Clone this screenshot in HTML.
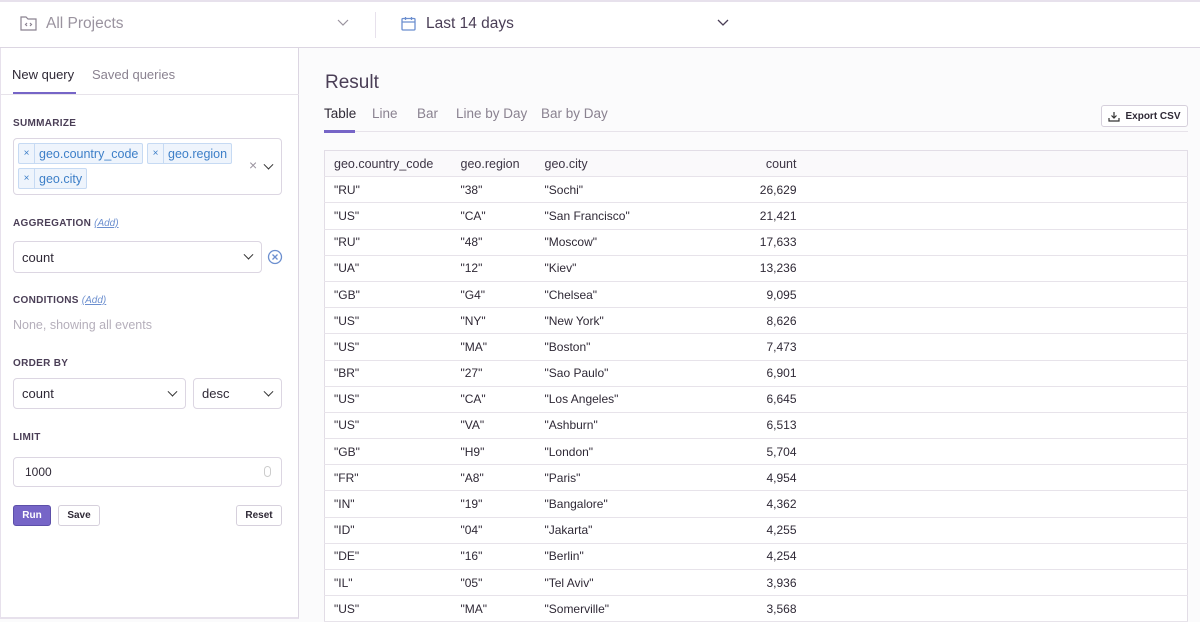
<!DOCTYPE html>
<html><head><meta charset="utf-8"><style>
*{box-sizing:border-box;margin:0;padding:0}
body{width:1200px;height:619px;overflow:hidden;font-family:"Liberation Sans",sans-serif;background:#fbfbfc;color:#2f2936;position:relative}
.top{position:absolute;left:0;top:0;width:1200px;height:48px;background:#fff;border-top:2px solid #e7e1ec;border-bottom:1px solid #dcd6e2}
.side{position:absolute;left:0;top:48px;width:299px;height:571px;background:#fff;border-right:1px solid #dcd6e2;border-left:1px solid #e7e1ec;border-bottom:2px solid #e7e1ec}
.lbl{position:absolute;left:12px;font-size:10px;font-weight:bold;color:#4a3e56;letter-spacing:.3px}
.add{font-style:italic;font-weight:normal;color:#6c8fcf;text-decoration:underline;letter-spacing:0;margin-left:3px;font-size:10px}
.box{position:absolute;background:#fff;border:1px solid #dcd6e2;border-radius:4px}
.sel{font-size:13px;color:#2f2936;padding-left:8px;display:flex;align-items:center}
.chev{position:absolute;right:9px;top:50%;margin-top:-3px;width:7px;height:7px;border-right:1.5px solid #333;border-bottom:1.5px solid #333;transform:rotate(45deg) translate(-2px,-2px)}
.tag{position:absolute;height:21px;background:#eef4fc;border:1px solid #c6daf3;border-radius:2px;font-size:12.5px;color:#3d7fc8;display:flex;align-items:center}
.tag b{font-weight:normal;width:16px;text-align:center;border-right:1px solid #c6daf3;height:100%;line-height:19px;font-size:10px}
.tag span{padding:0 4px}
.btn{position:absolute;height:21px;border:1px solid #d6d0dc;border-radius:3px;background:#fff;font-size:10px;font-weight:bold;display:flex;align-items:center;justify-content:center;color:#2f2936}
table{position:absolute;left:324px;top:150px;width:864px;border-collapse:collapse;background:#fff;border:1px solid #e2dde6;font-size:12px}
td,th{height:26.2px;border-bottom:1px solid #e7e3ea;text-align:left;padding-left:9px;font-weight:normal}
th{background:#faf9fb;color:#3d3545;font-size:12.5px}
.r{text-align:right;padding-right:0}
</style></head><body>
<div class="top">
<svg style="position:absolute;left:20px;top:13px" width="17" height="16" viewBox="0 0 17 16" fill="none" stroke="#8a8290" stroke-width="1.2"><path d="M1 2h5l2 2h8v11H1z"/><path d="M7 8l-1.5 1.5L7 11M10 8l1.5 1.5L10 11"/></svg>
<div style="position:absolute;left:46px;top:13px;font-size:15.5px;color:#9a939f">All Projects</div>
<svg style="position:absolute;left:337px;top:17px" width="12" height="8"><path d="M1 1l5 5 5-5" fill="none" stroke="#9a939f" stroke-width="1.2"/></svg>
<div style="position:absolute;left:375px;top:10px;width:1px;height:26px;background:#e7e1ec"></div>
<svg style="position:absolute;left:401px;top:14px" width="15" height="15" viewBox="0 0 15 15" fill="none" stroke="#6c8fcf" stroke-width="1.3"><rect x="1" y="2.5" width="13" height="11.5" rx="1"/><path d="M1 6h13M4.5 1v3M10.5 1v3"/></svg>
<div style="position:absolute;left:426px;top:13px;font-size:15.5px;color:#4a3e56">Last 14 days</div>
<svg style="position:absolute;left:717px;top:17px" width="12" height="8"><path d="M1 1l5 5 5-5" fill="none" stroke="#4a3e56" stroke-width="1.3"/></svg>
</div>
<div class="side">
<div style="position:absolute;left:11px;top:19px;font-size:13px;color:#2f2936">New query</div>
<div style="position:absolute;left:91px;top:19px;font-size:13px;color:#8a8290">Saved queries</div>
<div style="position:absolute;left:12px;top:44px;width:63px;height:3px;background:#7665c7"></div>
<div style="position:absolute;left:0;top:46px;width:298px;height:1px;background:#e7e3ea"></div>
<div class="lbl" style="top:70px">SUMMARIZE</div>
<div class="box" style="left:12px;top:90px;width:269px;height:57px">
<div class="tag" style="left:4px;top:4px"><b>×</b><span>geo.country_code</span></div>
<div class="tag" style="left:133px;top:4px"><b>×</b><span>geo.region</span></div>
<div class="tag" style="left:4px;top:29px"><b>×</b><span>geo.city</span></div>
<div style="position:absolute;left:235px;top:18px;color:#9a939f;font-size:14px">×</div>
<div class="chev"></div>
</div>
<div class="lbl" style="top:170px">AGGREGATION<span class="add">(Add)</span></div>
<div class="box sel" style="left:12px;top:193px;width:249px;height:32px">count<div class="chev"></div></div>
<svg style="position:absolute;left:266px;top:201px" width="16" height="16"><circle cx="8" cy="8" r="6.5" fill="none" stroke="#6c8fcf" stroke-width="1.3"/><path d="M5.5 5.5l5 5M10.5 5.5l-5 5" stroke="#6c8fcf" stroke-width="1.3"/></svg>
<div class="lbl" style="top:247px">CONDITIONS<span class="add">(Add)</span></div>
<div style="position:absolute;left:12px;top:270px;font-size:12.5px;color:#b5afbb">None, showing all events</div>
<div class="lbl" style="top:310px">ORDER BY</div>
<div class="box sel" style="left:12px;top:330px;width:173px;height:31px">count<div class="chev"></div></div>
<div class="box sel" style="left:192px;top:330px;width:89px;height:31px">desc<div class="chev"></div></div>
<div class="lbl" style="top:384px">LIMIT</div>
<div class="box sel" style="left:12px;top:409px;width:269px;height:30px;font-size:12px;padding-left:11px">1000<div style="position:absolute;right:10px;top:8px;width:7px;height:11px;border:1px solid #ccc;border-radius:4px"></div></div>
<div class="btn" style="left:12px;top:457px;width:38px;background:#7665c7;border-color:#5c4fa9;color:#fff">Run</div>
<div class="btn" style="left:57px;top:457px;width:42px">Save</div>
<div class="btn" style="left:235px;top:457px;width:46px">Reset</div>
</div>
<div style="position:absolute;left:325px;top:72px;font-size:19px;color:#4a3e56">Result</div>
<div style="position:absolute;left:324px;top:106px;font-size:13.5px;color:#8a8290;white-space:nowrap">
<span style="position:absolute;left:0;color:#2f2936">Table</span><span style="position:absolute;left:48px">Line</span><span style="position:absolute;left:93px">Bar</span><span style="position:absolute;left:132px">Line by Day</span><span style="position:absolute;left:217px">Bar by Day</span></div>
<div style="position:absolute;left:324px;top:131px;width:864px;height:1px;background:#e7e3ea"></div>
<div style="position:absolute;left:324px;top:130px;width:31px;height:3px;background:#7665c7"></div>
<div class="btn" style="left:1101px;top:105px;width:87px;height:22px;font-size:10px"><svg width="12" height="11" style="margin-right:5px"><path d="M6 1v6M3.5 4.5L6 7l2.5-2.5M1 7v3h10V7" fill="none" stroke="#333" stroke-width="1.2"/></svg>Export CSV</div>
<table>
<tr><th style="width:127px">geo.country_code</th><th style="width:84px">geo.region</th><th style="width:150px">geo.city</th><th class="r" style="width:111px">count</th><th></th></tr>
<tr><td>"RU"</td><td>"38"</td><td>"Sochi"</td><td class="r">26,629</td><td></td></tr>
<tr><td>"US"</td><td>"CA"</td><td>"San Francisco"</td><td class="r">21,421</td><td></td></tr>
<tr><td>"RU"</td><td>"48"</td><td>"Moscow"</td><td class="r">17,633</td><td></td></tr>
<tr><td>"UA"</td><td>"12"</td><td>"Kiev"</td><td class="r">13,236</td><td></td></tr>
<tr><td>"GB"</td><td>"G4"</td><td>"Chelsea"</td><td class="r">9,095</td><td></td></tr>
<tr><td>"US"</td><td>"NY"</td><td>"New York"</td><td class="r">8,626</td><td></td></tr>
<tr><td>"US"</td><td>"MA"</td><td>"Boston"</td><td class="r">7,473</td><td></td></tr>
<tr><td>"BR"</td><td>"27"</td><td>"Sao Paulo"</td><td class="r">6,901</td><td></td></tr>
<tr><td>"US"</td><td>"CA"</td><td>"Los Angeles"</td><td class="r">6,645</td><td></td></tr>
<tr><td>"US"</td><td>"VA"</td><td>"Ashburn"</td><td class="r">6,513</td><td></td></tr>
<tr><td>"GB"</td><td>"H9"</td><td>"London"</td><td class="r">5,704</td><td></td></tr>
<tr><td>"FR"</td><td>"A8"</td><td>"Paris"</td><td class="r">4,954</td><td></td></tr>
<tr><td>"IN"</td><td>"19"</td><td>"Bangalore"</td><td class="r">4,362</td><td></td></tr>
<tr><td>"ID"</td><td>"04"</td><td>"Jakarta"</td><td class="r">4,255</td><td></td></tr>
<tr><td>"DE"</td><td>"16"</td><td>"Berlin"</td><td class="r">4,254</td><td></td></tr>
<tr><td>"IL"</td><td>"05"</td><td>"Tel Aviv"</td><td class="r">3,936</td><td></td></tr>
<tr><td>"US"</td><td>"MA"</td><td>"Somerville"</td><td class="r">3,568</td><td></td></tr>
</table>
</body></html>
